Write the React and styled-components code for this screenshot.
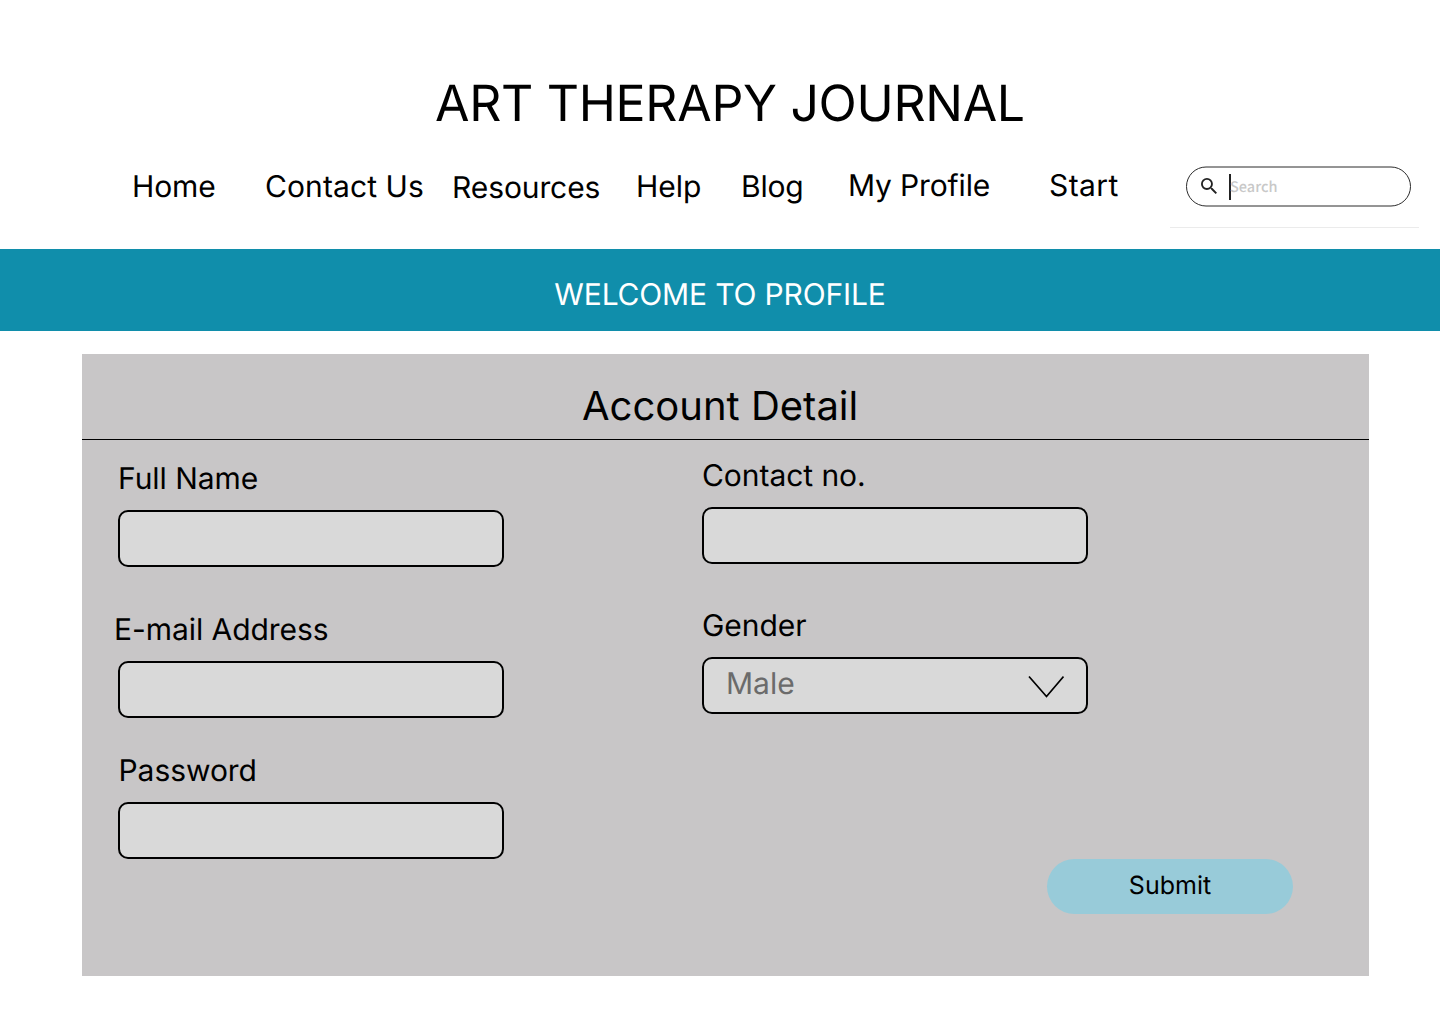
import React from 'react';
import styled, { createGlobalStyle } from 'styled-components';

const Global = createGlobalStyle`
  *, *::before, *::after { box-sizing: border-box; }
  body { margin: 0; background: #fff; color: #000; font-family: Inter, "Liberation Sans", sans-serif; text-rendering: geometricPrecision; }
`;
const Page = styled.div`
  width: 1440px; height: 1024px; background: #fff; overflow: hidden;
`;
const Header = styled.header`
  height: 249px; padding-top: 73px;
`;
const Title = styled.h1`
  margin: 0; padding-left: 435px; font-size: 50px; line-height: 63px; font-weight: 400; white-space: nowrap;
  letter-spacing: -0.31px;
`;
const Nav = styled.nav`
  display: flex; align-items: flex-start; padding-left: 132px; margin-top: 14px; height: 100px;
`;
const NavLink = styled.a`
  flex: none; width: ${p => p.$w}px; padding-top: ${p => p.$top}px;
  font-size: 30px; line-height: 36px; white-space: nowrap; color: #000;
  letter-spacing: ${p => p.$track}px;
`;
const SearchArea = styled.div`
  flex: none; width: 249px; height: 78px; padding: 16px 0 0 16px; border-bottom: 1px solid #ebebeb;
`;
const SearchBox = styled.label`
  position: relative; display: flex; align-items: center; width: 225px; height: 41px; padding-left: 15px;
  &::before {
    content: ''; position: absolute; left: 0; top: 0; width: 225px; height: 40px;
    border: 1px solid #2b2b2b; border-radius: 20px; transform: translateY(0.5px);
  }
`;
const SearchIcon = styled.svg`
  margin-bottom: 2px;
`;
const Caret = styled.span`
  width: 2px; height: 26px; margin-left: 12px; background: #222;
`;
const Placeholder = styled.span`
  margin: 1px 0 0 -1px; font: 500 14.5px/20px "Noto Sans CJK SC", sans-serif; color: #c8c8c8;
`;
const Banner = styled.div`
  height: 82px; padding-top: 28px; background: #108eab; color: #fff;
  text-align: center; font-size: 30px; line-height: 36px; letter-spacing: -0.16px;
`;
const Card = styled.main`
  width: 1287px; height: 622px; margin: 23px 0 0 82px; background: #c8c6c7;
`;
const CardTitle = styled.h2`
  margin: 0; height: 86px; padding: 28px 0 0 500px; border-bottom: 1px solid #000;
  font-size: 40px; line-height: 48px; font-weight: 400;
`;
const Form = styled.form`
  display: grid; grid-template-columns: 584px 1fr; padding-left: 36px;
`;
const Column = styled.div`
  padding-top: ${p => p.$top}px;
`;
const Field = styled.div`
  height: ${p => p.$h}px;
`;
const Label = styled.label`
  display: block; height: 49px; margin-left: ${p => p.$shift || 0}px;
  font-size: 30px; line-height: 36px; letter-spacing: -0.05px;
`;
const Box = styled.div`
  display: flex; justify-content: space-between; width: 386px; height: 57px;
  padding: 7px 22px 0 22px; border: 2px solid #000; border-radius: 10px; background: #d9d9d9;
  color: #6b6b6b; font-size: 30px; line-height: 36px;
`;
const Chevron = styled.svg`
  margin-top: 9px;
`;
const Submit = styled.button`
  display: block; width: 246px; height: 55px; margin: 100px 0 0 345px; padding: 0 0 2px; border: 0;
  border-radius: 28px; background: #98cbd9; color: #000; font: 400 25px/30px Inter, sans-serif;
  text-rendering: inherit;
`;

const links = [
  ['Home', 133, 19, -0.1], ['Contact Us', 187, 19, 0.1], ['Resources', 184, 20, -0.1], ['Help', 105, 19, 0],
  ['Blog', 107, 19, -0.2], ['My Profile', 201, 18, -0.15], ['Start', 121, 18, 0.4],
];

export default function App() {
  return (
    <Page>
      <Global />
      <Header>
        <Title>ART THERAPY JOURNAL</Title>
        <Nav>
          {links.map(([text, w, top, track]) => (
            <NavLink key={text} $w={w} $top={top} $track={track}>{text}</NavLink>
          ))}
          <SearchArea>
            <SearchBox>
              <SearchIcon width="16" height="16" viewBox="3 3 17.5 17.5" fill="#222">
                <path d="M15.5 14h-.79l-.28-.27A6.471 6.471 0 0 0 16 9.5 6.5 6.5 0 1 0 9.5 16c1.61 0 3.09-.59 4.23-1.57l.27.28v.79l5 4.99L20.49 19l-4.99-5zm-6 0C7.01 14 5 11.99 5 9.5S7.01 5 9.5 5 14 7.01 14 9.5 11.99 14 9.5 14z" />
              </SearchIcon>
              <Caret />
              <Placeholder>Search</Placeholder>
            </SearchBox>
          </SearchArea>
        </Nav>
      </Header>
      <Banner>WELCOME TO PROFILE</Banner>
      <Card>
        <CardTitle>Account Detail</CardTitle>
        <Form>
          <Column $top={21}>
            <Field $h={151}><Label>Full Name</Label><Box /></Field>
            <Field $h={141}><Label $shift={-4}>E-mail Address</Label><Box /></Field>
            <Field $h={107}><Label $shift={0.5}>Password</Label><Box /></Field>
          </Column>
          <Column $top={18}>
            <Field $h={150}><Label>Contact no.</Label><Box /></Field>
            <Field $h={151}>
              <Label>Gender</Label>
              <Box>
                Male
                <Chevron width="36" height="24" viewBox="0 0 36 24" fill="none" stroke="#000" strokeWidth="1.7">
                  <path d="M1 1.5L18.5 21.5L35.5 1.5" />
                </Chevron>
              </Box>
            </Field>
            <Submit type="button">Submit</Submit>
          </Column>
        </Form>
      </Card>
    </Page>
  );
}
